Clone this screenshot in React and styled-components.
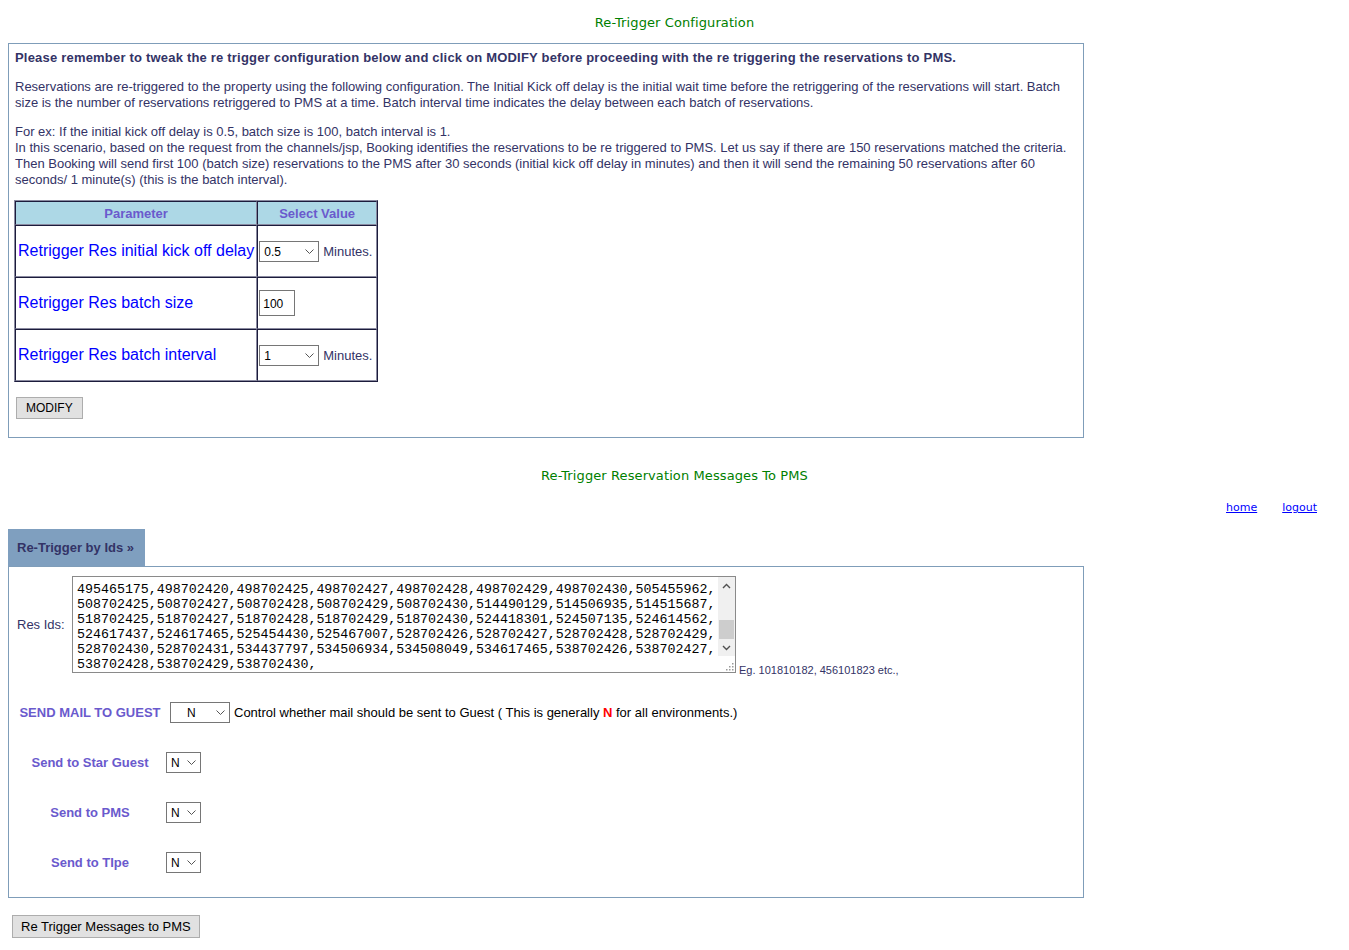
import React from 'react'
import styled, { createGlobalStyle } from 'styled-components'

const ids = [
  '495465175,498702420,498702425,498702427,498702428,498702429,498702430,505455962,',
  '508702425,508702427,508702428,508702429,508702430,514490129,514506935,514515687,',
  '518702425,518702427,518702428,518702429,518702430,524418301,524507135,524614562,',
  '524617437,524617465,525454430,525467007,528702426,528702427,528702428,528702429,',
  '528702430,528702431,534437797,534506934,534508049,534617465,538702426,538702427,',
  '538702428,538702429,538702430,'
].join('\n')

const params = [
  { label: 'Retrigger Res initial kick off delay', kind: 'select', value: '0.5', options: ['0.5', '1', '2'] },
  { label: 'Retrigger Res batch size', kind: 'input', value: '100' },
  { label: 'Retrigger Res batch interval', kind: 'select', value: '1', options: ['1', '2', '5'] }
]

const flags = [
  { label: 'Send to Star Guest' },
  { label: 'Send to PMS' },
  { label: 'Send to TIpe' }
]

const chevron =
  "url(\"data:image/svg+xml,%3Csvg xmlns='http://www.w3.org/2000/svg' width='9' height='5' viewBox='0 0 9 5'%3E%3Cpath d='M0.5 0.5 L4.5 4.5 L8.5 0.5' fill='none' stroke='%23555' stroke-width='1'/%3E%3C/svg%3E\")"

const Arrow = ({ up }) => (
  <svg width="9" height="6" viewBox="0 0 9 6">
    <path d={up ? 'M1 5 L4.5 1.5 L8 5' : 'M1 1 L4.5 4.5 L8 1'} fill="none" stroke="#505050" strokeWidth="1.4" />
  </svg>
)

const Grip = () => (
  <svg width="9" height="9" viewBox="0 0 9 9">
    {[[7, 1], [7, 4], [4, 4], [7, 7], [4, 7], [1, 7]].map(([x, y]) => (
      <rect key={x + '-' + y} x={x} y={y} width="1.5" height="1.5" fill="#9a9a9a" />
    ))}
  </svg>
)

const App = () => {
  return (
    <>
      <GlobalStyle />
      <Page>
        <Heading top={7} bottom={12}>Re-Trigger Configuration</Heading>
        <Box>
          <Notice>Please remember to tweak the re trigger configuration below and click on MODIFY before proceeding with the re triggering the reservations to PMS.</Notice>
          <Para>
            Reservations are re-triggered to the property using the following configuration. The Initial Kick off delay is the initial wait time before the retriggering of the reservations will start. Batch size is the number of reservations retriggered to PMS at a time. Batch interval time indicates the delay between each batch of reservations.
          </Para>
          <Para>
            For ex: If the initial kick off delay is 0.5, batch size is 100, batch interval is 1.<br/>
            In this scenario, based on the request from the channels/jsp, Booking identifies the reservations to be re triggered to PMS. Let us say if there are 150 reservations matched the criteria. Then Booking will send first 100 (batch size) reservations to the PMS after 30 seconds (initial kick off delay in minutes) and then it will send the remaining 50 reservations after 60 seconds/ 1 minute(s) (this is the batch interval).
          </Para>
          <ParamTable>
            <thead>
              <tr>
                <HeadCell width={240}>Parameter</HeadCell>
                <HeadCell>Select Value</HeadCell>
              </tr>
            </thead>
            <tbody>
              {params.map(p => (
                <tr key={p.label}>
                  <LabelCell>{p.label}</LabelCell>
                  <ValueCell>
                    {p.kind === 'select' ? (
                      <>
                        <Select width={60} defaultValue={p.value}>
                          {p.options.map(o => <option key={o}>{o}</option>)}
                        </Select>
                        <Unit>Minutes.</Unit>
                      </>
                    ) : (
                      <NumInput defaultValue={p.value} />
                    )}
                  </ValueCell>
                </tr>
              ))}
            </tbody>
          </ParamTable>
          <Button>MODIFY</Button>
        </Box>

        <Heading top={30} bottom={17}>Re-Trigger Reservation Messages To PMS</Heading>
        <Links>
          <Link href="#">home</Link>
          <Link href="#">logout</Link>
        </Links>

        <Tab>Re-Trigger by Ids »</Tab>
        <Panel>
          <IdsRow>
            <IdsLabel>Res Ids:</IdsLabel>
            <AreaFrame>
              <IdsArea defaultValue={ids} />
              <ScrollBar>
                <ScrollButton><Arrow up /></ScrollButton>
                <ScrollTrack>
                  <ScrollThumb />
                </ScrollTrack>
                <ScrollButton><Arrow /></ScrollButton>
                <ScrollCorner><Grip /></ScrollCorner>
              </ScrollBar>
            </AreaFrame>
            <Hint>Eg. 101810182, 456101823 etc.,</Hint>
          </IdsRow>
          <FlagRow>
            <FlagLabel>SEND MAIL TO GUEST</FlagLabel>
            <Select width={60} gap={5} indent={16} defaultValue="N">
              <option>N</option>
              <option>Y</option>
            </Select>
            <Control>
              Control whether mail should be sent to Guest ( This is generally <Red>N</Red> for all environments.)
            </Control>
          </FlagRow>
          {flags.map(f => (
            <FlagRow key={f.label}>
              <FlagLabel>{f.label}</FlagLabel>
              <Select width={35} gap={1} defaultValue="N">
                <option>N</option>
                <option>Y</option>
              </Select>
            </FlagRow>
          ))}
        </Panel>
        <SubmitButton>Re Trigger Messages to PMS</SubmitButton>
      </Page>
    </>
  )
}

export default App

const GlobalStyle = createGlobalStyle`
    body{
        margin:8px;
        background:#fff;
        font-family:"Liberation Sans", Arial, sans-serif;
        color:#333366;
    }
`
const Page = styled.div`
    display:flex;
    flex-direction:column;
    align-items:stretch;
`
const Heading = styled.div`
    text-align:center;
    font-family:"DejaVu Sans", Verdana, sans-serif;
    font-size:13px;
    letter-spacing:0.1px;
    line-height:16px;
    color:#008000;
    margin-top:${p => p.top}px;
    margin-bottom:${p => p.bottom}px;
`
const Box = styled.div`
    width:1076px;
    box-sizing:border-box;
    border:1px solid #7f9db9;
    padding:6px 6px 18px;
`
const Notice = styled.div`
    font-weight:bold;
    font-size:13px;
    letter-spacing:0.2px;
    line-height:16px;
    margin-bottom:13px;
`
const Para = styled.p`
    margin:0 0 13px;
    font-size:13px;
    line-height:16px;
`
const ParamTable = styled.table`
    border-collapse:separate;
    border-spacing:0;
    border:1px solid #1c1c3c;
    border-top-color:#8a8aa0;
    border-left-color:#8a8aa0;
    width:364px;
    margin:-1px 0 0 -1px;
`
const HeadCell = styled.th`
    background:#add8e6;
    color:#6a5acd;
    font-size:13px;
    font-weight:bold;
    height:22px;
    padding:0;
    border:1px solid #1c1c3c;
    border-right-color:#8a8aa0;
    border-bottom-color:#8a8aa0;
    width:${p => (p.width ? p.width + 'px' : 'auto')};
`
const LabelCell = styled.td`
    color:#0000ff;
    font-size:16px;
    height:50px;
    padding:0 2px;
    border:1px solid #1c1c3c;
    border-right-color:#8a8aa0;
    border-bottom-color:#8a8aa0;
    white-space:nowrap;
`
const ValueCell = styled(LabelCell)`
    color:#333366;
    font-size:13px;
    padding:0 1px;
`
const Select = styled.select`
    appearance:none;
    -webkit-appearance:none;
    width:${p => p.width}px;
    height:21px;
    box-sizing:border-box;
    margin-left:${p => p.gap || 0}px;
    font-family:"Liberation Sans", Arial, sans-serif;
    font-size:12px;
    color:#000;
    background:#fff ${chevron} no-repeat right 4px center;
    border:1px solid #767676;
    border-radius:0;
    padding:1px 0 0 ${p => p.indent || 4}px;
    vertical-align:middle;
`
const Unit = styled.span`
    margin-left:4px;
    vertical-align:middle;
`
const NumInput = styled.input`
    width:36px;
    height:26px;
    box-sizing:border-box;
    border:1px solid #767676;
    padding:1px 3px 0;
    font-family:"Liberation Sans", Arial, sans-serif;
    font-size:12px;
    color:#000;
    vertical-align:middle;
`
const Button = styled.button`
    align-self:flex-start;
    margin:15px 0 0 1px;
    height:22px;
    padding:0 9px;
    font-family:"Liberation Sans", Arial, sans-serif;
    font-size:12px;
    color:#000;
    background:#e1e1e1;
    border:1px solid #adadad;
    border-radius:0;
`
const Links = styled.div`
    display:flex;
    justify-content:flex-end;
    gap:25px;
    padding-right:24px;
    line-height:14px;
    margin-bottom:14px;
`
const Link = styled.a`
    font-family:"DejaVu Sans", Verdana, sans-serif;
    font-size:11px;
    color:#0000ff;
`
const Tab = styled.div`
    align-self:flex-start;
    width:137px;
    height:37px;
    box-sizing:border-box;
    padding-left:9px;
    background:#7f9fbf;
    color:#333366;
    font-weight:bold;
    font-size:13px;
    line-height:37px;
`
const Panel = styled.div`
    width:1076px;
    box-sizing:border-box;
    border:1px solid #7f9db9;
    padding:9px 8px 10px 6px;
`
const IdsRow = styled.div`
    display:flex;
    align-items:center;
    padding-left:2px;
    margin-bottom:14px;
`
const IdsLabel = styled.span`
    font-size:13px;
    width:55px;
`
const AreaFrame = styled.div`
    display:flex;
    width:664px;
    height:97px;
    box-sizing:border-box;
    border:1px solid #8a8a8a;
    background:#fff;
`
const IdsArea = styled.textarea`
    flex:1;
    min-width:0;
    box-sizing:border-box;
    padding:5px 2px 2px 4px;
    font-family:"Liberation Mono", "Courier New", monospace;
    font-size:13.3px;
    line-height:15px;
    color:#000;
    border:none;
    outline:none;
    resize:none;
    overflow:hidden;
    white-space:pre;
`
const ScrollBar = styled.div`
    width:17px;
    display:flex;
    flex-direction:column;
    background:#f0f0f0;
`
const ScrollButton = styled.div`
    height:17px;
    display:flex;
    align-items:center;
    justify-content:center;
`
const ScrollTrack = styled.div`
    flex:1;
    display:flex;
    flex-direction:column;
    justify-content:flex-end;
    padding:0 1px;
`
const ScrollThumb = styled.div`
    height:19px;
    background:#cdcdcd;
`
const ScrollCorner = styled.div`
    height:16px;
    display:flex;
    align-items:flex-end;
    justify-content:flex-end;
    background:#fff;
    padding:0 1px 1px 0;
    box-sizing:border-box;
`
const Hint = styled.span`
    align-self:flex-end;
    font-size:11px;
    margin-left:3px;
    line-height:12px;
    margin-bottom:-3px;
`
const FlagRow = styled.div`
    display:flex;
    align-items:center;
    height:50px;
`
const FlagLabel = styled.span`
    width:150px;
    text-align:center;
    font-weight:bold;
    font-size:13px;
    color:#6a5acd;
`
const Control = styled.span`
    font-size:13px;
    color:#000;
    margin-left:4px;
`
const Red = styled.b`
    color:#ff0000;
`
const SubmitButton = styled(Button)`
    margin:17px 0 0 4px;
    height:23px;
    font-size:13px;
    padding:0 8px;
`
